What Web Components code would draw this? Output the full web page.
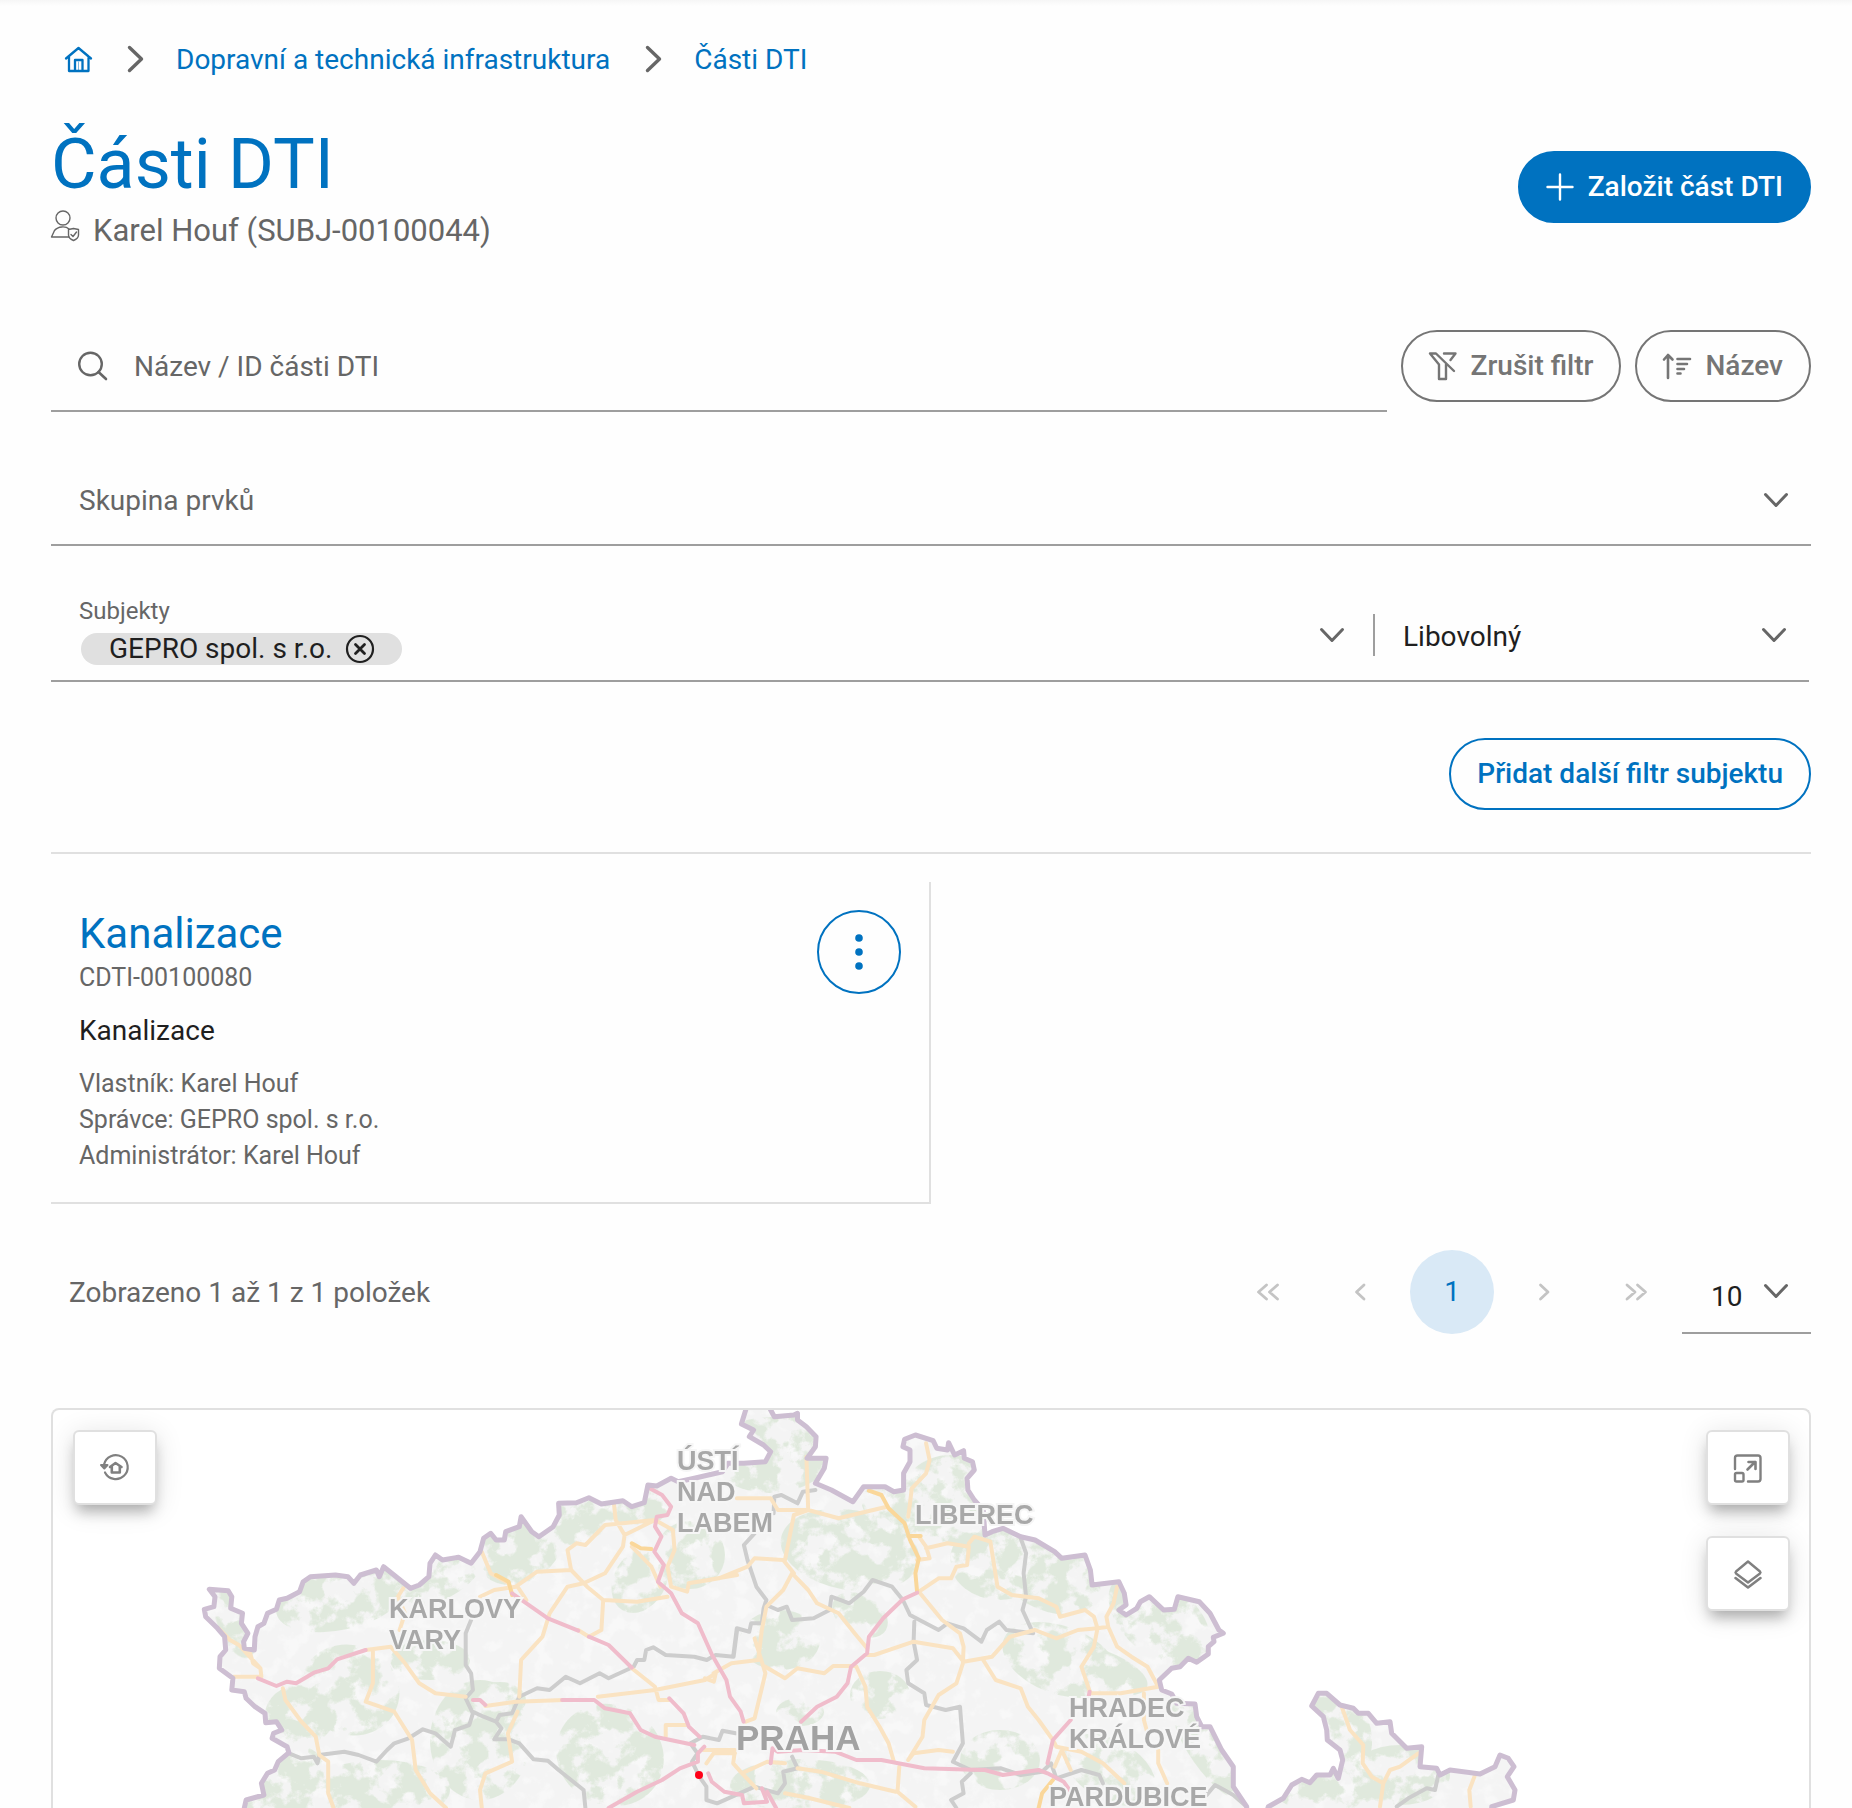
<!DOCTYPE html>
<html lang="cs">
<head>
<meta charset="utf-8">
<meta name="viewport" content="width=device-width, initial-scale=1">
<title>Části DTI</title>
<style>
  :root {
    --blue: #0072c0;
    --blue-soft: #d9e9f6;
    --text: #1f1f1f;
    --muted: #666;
    --control: #757575;
    --field-line: #9e9e9e;
    --rule: #e0e0e0;
  }
  html, body { height: 100%; }
  body {
    margin: 0;
    background: #fefefe;
    color: var(--text);
    font: 400 28px/40px Roboto, "Liberation Sans", sans-serif;
  }
</style>
</head>
<body>
<dti-page></dti-page>

<script>
const ICONS = {
  home: '<path d="M2 12.500 14.500 2 27 12.500M5 10.500V25H24.500V10.500M11 25V14H18.500V25" stroke-width="2.300"/><path d="M14.500 24V16" stroke-width="1" opacity=".5"/>',
  next: '<path d="M9.500 1.500 21.500 13 9.500 24.500" stroke-width="3.400"/>',
  user: '<g stroke-width="1.400"><circle cx="12" cy="10" r="7"/><path d="M18 29H.5L3.500 22.500C7 18 15 18 18 21"/><path d="M17.500 21.500 22.500 20.500 27.500 21.500V27C27.500 30 25 31.500 22.500 32.500 20 31.500 17.500 30 17.500 27Z"/><path d="M20 26.500 22 28.500 25.500 24"/></g>',
  plus: '<path d="M14 1.500V26.500M1.500 14H26.500" stroke-width="2.400"/>',
  search: '<circle cx="11.500" cy="12" r="11.300" stroke-width="2.400"/><path d="M19.500 20 27 27" stroke-width="2.600"/>',
  nofilter: '<path d="M1 1.500H7L25 19M1 1.500 10 12.500V27H17V12.500M15 1.500H26.500L21.500 8" stroke-width="2.400"/>',
  sort: '<path d="M5 26V3M1 7.500 5 3 9.500 7.500M14.500 7H27M14.500 12H24M14.500 17H21M14.500 21.500H17.500" stroke-width="2.600"/>',
  down: '<path d="M3.500 8.500 14 19.500 24.500 8.500" stroke-width="3"/>',
  remove: '<circle cx="14" cy="14" r="13" stroke-width="2.200"/><path d="M9.500 9.500 18.500 18.500M18.500 9.500 9.500 18.500" stroke-width="2.800"/>',
  dots: '<g fill="currentColor" stroke="none"><circle cx="14" cy="0" r="3.800"/><circle cx="14" cy="14" r="3.800"/><circle cx="14" cy="28" r="3.800"/></g>',
  first: '<path d="M12.500 7 4.500 14 12.500 21M23.500 7 15.500 14 23.500 21" stroke-width="2.800"/>',
  prev: '<path d="M18 7 10.500 14 18 21" stroke-width="2.800"/>',
  forward: '<path d="M10.500 7 18 14 10.500 21" stroke-width="2.800"/>',
  last: '<path d="M5 7 13 14 5 21M15.500 7 23.500 14 15.500 21" stroke-width="2.800"/>',
  reset: '<path d="M3 10.500A12 12 0 1 1 4 18.500" stroke-width="2.200"/><path d="M0 11H6.500L3.300 14.500Z" fill="currentColor" stroke-width="2"/><path d="M9 13 14.500 9 20.500 13M10.800 12.500V18.500H18.800V12.500" stroke-width="2.600"/>',
  expand: '<path d="M1 15V4Q1 1.500 3.500 1.500H24Q26.500 1.500 26.500 4V25Q26.500 27.500 24 27.500H14" stroke-width="2.400"/><rect x="1" y="19" width="8.500" height="8.500" rx="1.500" stroke-width="2.400"/><path d="M13.500 15.500 21 8M14.500 8H21.500V15" stroke-width="2.600"/>',
  layers: '<path d="M14 1.500 26 11.500Q27 12.500 26 13.500L14 22.500 2 13.500Q1 12.500 2 11.500Z" stroke-width="2.400"/><path d="M1.500 18 14 27.500 26.500 18" stroke-width="2.600"/>'
};

const FOCUS = 'button:focus-visible, select:focus-visible, input:focus-visible, a:focus-visible { outline: 3px solid var(--blue); outline-offset: 2px; }';

/* Base class: renders the element's template into an open shadow root. */
class DtiElement extends HTMLElement {
  connectedCallback() {
    if (this.shadowRoot) return;
    const t = document.createElement('template');
    t.innerHTML = `<style>*, *::before { box-sizing: border-box; } ${FOCUS} ${this.styles()}</style>${this.markup()}`;
    this.attachShadow({ mode: 'open' }).append(t.content.cloneNode(true));
  }
  styles() { return ''; }
  markup() { return '<slot></slot>'; }
}

class DtiIcon extends DtiElement {
  styles() {
    return `:host { display: block; flex: none; width: 28px; height: 28px; }
      svg { display: block; width: 28px; height: 28px; overflow: visible; fill: none; stroke: currentColor; stroke-linecap: round; stroke-linejoin: round; }`;
  }
  markup() { return `<svg viewBox="0 0 28 28" aria-hidden="true">${ICONS[this.getAttribute('name')]}</svg>`; }
}

class DtiButton extends DtiElement {
  styles() {
    return `:host { display: block; flex: none; color: var(--control); }
      :host([kind="primary"]), :host([kind="outline"]) { color: var(--blue); }
      button { display: flex; align-items: center; gap: 14px; padding: 14px 26px; border: 2px solid currentColor; border-radius: 36px;
        background: transparent; color: inherit; font: inherit; font-weight: 500; white-space: nowrap; cursor: pointer; }
      :host([kind="primary"]) button { background: var(--blue); border-color: var(--blue); color: #fff; }`;
  }
  markup() {
    const icon = this.getAttribute('icon');
    return `<button type="button">${icon ? `<dti-icon name="${icon}"></dti-icon>` : ''}<span><slot></slot></span></button>`;
  }
}

class DtiBreadcrumb extends DtiElement {
  styles() {
    return `:host { display: block; padding: 40px 0 0 13px; }
      ol { display: flex; flex-wrap: wrap; align-items: center; gap: 0 28px; margin: 0; padding: 0; list-style: none; }
      li { display: flex; align-items: center; gap: 28px; }
      li > dti-icon { color: var(--muted); }
      a { color: var(--blue); text-decoration: none; }`;
  }
  markup() {
    return `<nav aria-label="Drobečková navigace"><ol>
      <li><a href="#" aria-label="Domů"><dti-icon name="home"></dti-icon></a></li>
      <li><dti-icon name="next"></dti-icon><a href="#dti">Dopravní a technická infrastruktura</a></li>
      <li><dti-icon name="next"></dti-icon><a href="#casti" aria-current="page">Části DTI</a></li>
    </ol></nav>`;
  }
}

class DtiHeading extends DtiElement {
  styles() {
    return `:host { display: flex; align-items: center; justify-content: space-between; gap: 28px; margin-top: 40px; }
      h1 { margin: 0; color: var(--blue); font-size: 70px; font-weight: 400; line-height: 88px; }
      p { display: flex; gap: 14px; margin: 0; color: var(--muted); font-size: 31px; line-height: 46px; }`;
  }
  markup() {
    return `<div><h1><slot name="title"></slot></h1><p><dti-icon name="user"></dti-icon><slot name="subject"></slot></p></div><slot name="action"></slot>`;
  }
}

class DtiSearch extends DtiElement {
  styles() {
    return `:host { display: flex; align-items: flex-start; gap: 14px; margin-top: 68px; color: var(--muted); }
      label { flex: 1; min-width: 0; display: flex; align-items: center; gap: 27px; padding: 24px 28px; border-bottom: 2px solid var(--field-line); }
      input { flex: 1; min-width: 0; height: 40px; padding: 2px 0 0; border: 0; background: none; font: inherit; color: var(--text); }
      input::placeholder { color: var(--muted); opacity: 1; }
      .actions { display: flex; gap: 14px; padding-top: 8px; }`;
  }
  markup() {
    return `<label><dti-icon name="search"></dti-icon><input type="text" placeholder="Název / ID části DTI" aria-label="Název / ID části DTI"></label>
      <div class="actions"><slot></slot></div>`;
  }
}

/* Drop-down: a native select in a grid cell shared with its chevron. */
class DtiSelect extends DtiElement {
  styles() {
    return `:host { display: block; color: var(--text); }
      :host([muted]) { color: var(--muted); }
      div { display: grid; align-items: center; }
      select, dti-icon { grid-area: 1 / 1; }
      select { appearance: none; width: 100%; height: var(--select-height, 88px); padding: var(--select-padding, 2px 60px 0 28px); border: 0; background: none; color: inherit; font: inherit; cursor: pointer; }
      dti-icon { justify-self: end; margin-right: 21px; color: var(--muted); pointer-events: none; }`;
  }
  markup() {
    const options = this.getAttribute('options').split('|').map(o => `<option>${o}</option>`).join('');
    return `<div><select aria-label="${this.getAttribute('label')}">${options}</select><dti-icon name="down"></dti-icon></div>`;
  }
}

class DtiSubjects extends DtiElement {
  styles() {
    return `:host { display: flex; align-items: center; border-bottom: 2px solid var(--field-line); }
      .field { flex: 1; min-width: 0; padding: 7px 28px 15px; }
      .label { display: block; color: var(--muted); font-size: 24px; line-height: 28px; }
      .chip { display: inline-flex; align-items: center; gap: 14px; height: 32px; margin: 8px 0 0 2px; padding: 0 28px; border-radius: 16px; background: var(--rule); vertical-align: top; white-space: nowrap; }
      button { display: block; padding: 0; border: 0; background: none; color: inherit; cursor: pointer; }
      .toggle { margin-right: 27px; color: var(--muted); }
      dti-select { flex: 0 1 434px; --select-height: 90px; --select-padding: 4px 60px 0 28px; }
      .divider { flex: none; width: 2px; height: 42px; background: var(--field-line); }`;
  }
  markup() {
    return `<div class="field" role="group" aria-labelledby="l"><span class="label" id="l">Subjekty</span>
        <span class="chip"><slot></slot><button type="button" aria-label="Odebrat"><dti-icon name="remove"></dti-icon></button></span></div>
      <button type="button" class="toggle" aria-label="Rozbalit subjekty"><dti-icon name="down"></dti-icon></button>
      <span class="divider"></span>
      <dti-select label="Role subjektu" options="Libovolný|Vlastník|Správce|Administrátor"></dti-select>`;
  }
}

class DtiCard extends DtiElement {
  styles() {
    return `:host { display: flex; align-items: flex-start; gap: 28px; width: 50%; margin-top: 28px; padding: 28px; border: solid var(--rule); border-width: 0 2px 2px 0; box-sizing: border-box; }
      .body { flex: 1; min-width: 0; }
      h2 { margin: 0; font-size: 42px; font-weight: 400; line-height: 48px; }
      a { color: var(--blue); text-decoration: none; }
      .id { margin: 0; color: var(--muted); font-size: 25px; line-height: 40px; }
      .group { margin: 13px 0 15px; }
      .roles { color: var(--muted); font-size: 25px; line-height: 36px; }
      button { flex: none; display: grid; place-items: center; width: 84px; height: 84px; padding: 0; border: 2px solid var(--blue); border-radius: 50%; background: none; color: var(--blue); cursor: pointer; }`;
  }
  markup() {
    return `<div class="body"><h2><a href="#detail"><slot name="name"></slot></a></h2>
      <p class="id"><slot name="id"></slot></p><p class="group"><slot name="group"></slot></p>
      <div class="roles"><slot></slot></div></div>
      <button type="button" aria-label="Další akce"><dti-icon name="dots"></dti-icon></button>`;
  }
}

class DtiPaginator extends DtiElement {
  styles() {
    return `:host { display: flex; flex-wrap: wrap; align-items: center; gap: 0 4px; margin-top: 46px; color: var(--muted); }
      .info { flex: 1; padding: 2px 0 0 18px; }
      nav { display: flex; gap: 8px; }
      button { display: grid; place-items: center; width: 84px; height: 84px; padding: 0; border: 0; border-radius: 50%; background: none; color: #c4c4c4; font: inherit; }
      button[aria-current] { background: var(--blue-soft); color: var(--blue); }
      dti-select { width: 129px; border-bottom: 2px solid var(--field-line); --select-height: 82px; --select-padding: 12px 0 0 29px; }`;
  }
  markup() {
    return `<span class="info"><slot></slot></span>
      <nav aria-label="Stránkování">
        <button type="button" disabled aria-label="První strana"><dti-icon name="first"></dti-icon></button>
        <button type="button" disabled aria-label="Předchozí strana"><dti-icon name="prev"></dti-icon></button>
        <button type="button" aria-current="page">1</button>
        <button type="button" disabled aria-label="Další strana"><dti-icon name="forward"></dti-icon></button>
        <button type="button" disabled aria-label="Poslední strana"><dti-icon name="last"></dti-icon></button>
      </nav>
      <dti-select label="Počet položek na stránku" options="10|20|50"></dti-select>`;
  }
}

/* Map sheets: origin x, origin y and the digitising scale of each axis. */
const SHEETS = { w: [180, 1400, 2.8, 3], m: [660, 1400, 2.8, 3], e: [1100, 1500, 3, 3] };
const trace = (sheet, pts) => {
  const [ox, oy, sx, sy] = SHEETS[sheet];
  return pts.trim().split(/\s+/).map(p => {
    const [x, y] = p.split(',');
    return (ox + x / sx).toFixed(1) + ' ' + (oy + y / sy).toFixed(1);
  }).join('L');
};
const lines = list => list.map(([s, p]) => 'M' + trace(s, p)).join('');

const COUNTRY = 'M' + [
  ['w', '178,1300 180,1224 185,1200 235,1185 228,1150 245,1120 265,1110 275,1085 305,1058 300,1040 258,1015 262,1000 285,990 270,965 240,968 238,940 210,920 185,895 180,875 145,870 148,835 110,805 112,770 128,750 125,710 105,685 72,650 68,628 95,620 98,590 82,568 135,572 145,590 142,625 175,640 172,670 190,700 178,725 180,745 208,750 210,710 218,680 235,670 245,640 270,628 278,600 300,595 335,575 345,545 365,530 435,525 470,530 487,550 505,525 550,510 558,530 570,500 605,530 645,565 670,555 697,530 700,490 715,465 735,480 780,472 815,490 840,455 850,415 870,400 885,420 908,420 912,395 950,380 955,350 985,395 1005,410 1045,380 1062,345 1060,310 1110,308 1145,293 1180,312 1240,302 1265,320 1300,308 1310,255 1335,258 1375,235 1395,245 1440,235'],
  ['m', '175,215 190,190 235,190 295,185 310,155 290,135 250,110 262,90 228,72 240,30 240,10 300,10 320,50 375,45 385,40 385,60 410,80 437,110 435,140 412,175 465,175 460,205 435,250 480,270 540,305 570,260 630,260 655,275 682,270 682,220 700,185 700,150 680,140 685,118 715,105 765,122 775,145 805,150 808,128 825,165 850,152 852,175 875,185 880,210 860,235 862,270 880,300 905,330 910,405 930,395 960,385 1010,410 1050,420 1105,455 1125,475 1190,465 1205,510 1210,555 1285,545 1300,580 1305,615 1285,630 1305,645 1335,625 1345,605 1370,590 1410,630 1440,628 1450,590 1510,605 1540,640 1565,690'],
  ['e', '370,400 340,412 342,425 325,440 325,462 290,487 265,475 240,500 215,505 178,540 185,570 215,582 230,610 285,612 290,650 305,680 330,680 365,750 400,800 400,860 440,920 440,970 490,970 505,920 550,895 575,855 605,838 630,848 650,825 690,825 700,805 715,835 728,780 720,750 682,720 680,690 670,650 635,618 655,580 680,580 720,615 760,625 775,640 805,640 830,670 870,665 875,700 920,745 965,740 960,800 1010,805 1020,825 1050,810 1140,822 1185,800 1200,765 1225,775 1242,800 1222,830 1245,870 1240,900 1175,920 1175,970']
].map(([s, p]) => trace(s, p)).join('L') + 'Z';

const REGIONS = lines([
  ['w', '305,1060 340,1075 375,1070 385,1090 390,1065 460,1055 500,1065 550,1085 580,1050 600,1030 640,1015 680,988 715,1000 758,1040 770,990 810,975 820,940 800,895 820,870 815,820 800,795 800,700 815,660'],
  ['w', '820,935 850,950 885,965 900,985 880,1018 920,1018 950,1030 990,1078 1030,1082 1060,1110 1095,1140 1130,1170 1135,1224'],
  ['w', '885,965 895,945 930,940 950,890 1000,865 1035,870 1080,830 1120,850 1175,820 1200,835 1270,800 1280,780 1300,780 1305,750 1325,742 1360,765 1440,770 1475,780 1500,765 1550,770 1560,690'],
  ['m', '205,770 215,685 250,695 255,670 285,670 290,625 298,600 270,560 245,480 235,435 265,400'],
  ['m', '298,615 330,630 355,620 370,660 430,655 475,630 480,590 530,610 570,575 595,540 650,560 680,600 700,645 780,690 805,670 850,685 900,725 915,690 950,665 970,690 1045,700 1015,630 1025,590 1018,520 1025,460 1010,415'],
  ['m', '435,270 400,275 385,310 340,285 320,290 318,340'],
  ['m', '712,665 710,725 720,780 690,810 695,850 740,880 745,915 800,930 840,920 848,1030 820,1085 870,1110 955,1105 1010,1125 1070,1115 1095,1090 1110,1135 1180,1110 1230,1125 1240,1150'],
  ['m', '870,1120 845,1145 850,1180 815,1200 830,1224'],
  ['m', '212,1000 175,992 165,1020 120,1010 85,1030 105,1060 90,1085 110,1130 130,1160 130,1200 160,1210 265,1160 330,1180 350,1150 345,1115 385,1105 370,1070'],
  ['e', '440,920 400,885 345,855 320,885'], ['e', '890,920 925,895 980,865 1005,870 1015,825']
]);

const ROADS = lines([
  ['w', '108,685 140,720 165,735 225,805 228,830 150,830'], ['w', '195,755 205,790 225,805'],
  ['w', '288,865 295,900 340,965 380,1010 390,1065 415,1085 415,1180 430,1224'],
  ['w', '520,750 590,740 630,790 670,850 715,880 800,890'], ['w', '540,750 540,850 520,905 600,935 650,1020 660,1110 700,1180 745,1224'],
  ['w', '625,565 610,590 630,640 615,690'], ['w', '845,455 870,520 920,550 930,580'], ['w', '840,590 880,570 940,560 1000,515 1095,510'],
  ['w', '945,560 970,600'], ['w', '1095,510 1085,450 1110,430 1135,435 1190,375 1330,360'], ['w', '1215,310 1220,360 1245,405 1240,440 1190,520 1130,550 1085,560 1035,640 1015,710 955,780 950,890'],
  ['w', '1095,510 1140,560 1185,600 1280,605 1365,590'], ['w', '1185,600 1180,690 1145,710 1115,690'], ['w', '1245,405 1330,360 1380,390 1385,450 1365,500 1375,560 1420,575 1425,550 1560,525'],
  ['w', '1265,440 1320,500 1345,560'], ['w', '855,918 940,905 1075,900'], ['w', '945,935 918,1000 930,1085 855,1120 840,1170 845,1224'],
  ['w', '1265,805 1330,860 1340,900 1370,900'], ['w', '1170,890 1330,870 1470,840 1500,820 1495,845 1470,835'], ['w', '1360,1010 1360,975 1420,975'],
  ['m', '150,820 200,790 275,780 285,690 298,620 345,570 370,520 415,570 440,610 500,640 545,700 580,745'],
  ['m', '265,715 295,820 265,955 240,965'], ['m', '295,800 350,835 385,805 460,820 485,798 545,798'],
  ['m', '80,550 165,535 245,500 265,475 345,480 375,520'], ['m', '350,480 375,345 415,330 410,170'], ['m', '215,295 310,295 330,330 415,330 500,355 635,320'],
  ['m', '745,130 755,180 745,220 705,265 700,310 695,350'], ['m', '725,410 745,440 755,475 720,480'], ['m', '745,445 805,430 865,440 860,495 830,500 815,535 780,535 725,575 790,660 840,700 850,740 848,790 830,850 780,885 740,960 735,1010 695,1080'],
  ['m', '865,430 880,410 925,425 945,560 985,585 1060,595 1110,620 1120,650 1190,630 1215,650 1225,685'], ['m', '1280,560 1270,610 1250,650 1255,680 1225,685 1170,690 1110,715 1050,690 980,710 930,770 850,785 820,745 710,725 600,765 580,765'],
  ['m', '1225,685 1215,740 1180,800 1205,880 1290,880 1395,860 1365,800 1320,770 1280,740 1255,680'], ['m', '905,780 940,840 1010,865 1030,920 1060,960 1100,1020 1110,1040'],
  ['m', '550,800 575,860 580,920 615,980 640,1030 655,1085'], ['m', '695,1080 710,1060 780,1050 820,1055'], ['m', '670,1100 665,1175 715,1220'], ['m', '385,1105 450,1115 560,1150 660,1175'], ['m', '350,1180 420,1195 530,1224'],
  ['m', '1110,1040 1180,1055 1240,1090 1300,1150'], ['m', '1355,880 1355,960 1365,1000'], ['m', '1395,1050 1395,1090 1420,1150'], ['m', '1105,1100 1125,1050 1150,1110'],
  ['m', '120,1050 210,1050 205,1090 230,1120 300,1085 350,1090'], ['m', '230,1120 270,1165'], ['m', '130,1090 150,1060 210,1060'],
  ['e', '725,620 750,690 790,735 788,790 815,830 850,850 840,920'], ['e', '955,760 900,800 870,810 850,850'], ['e', '1125,825 1108,870 1112,920']
]);

const MAIN_ROADS = lines([
  ['w', '885,525 920,545 930,585'], ['w', '1265,430 1290,445 1320,447'],
  ['m', '585,272 620,285 640,325 685,370 700,420 725,475 715,520 720,575'], ['m', '695,408 730,408'], ['m', '1100,1140 1070,1180 1060,1224']
]);

const MOTORWAYS = lines([
  ['w', '218,835 270,858 300,845 325,850 375,818 415,805 440,778 520,750'], ['w', '930,580 1030,655 1115,692'], ['w', '1145,710 1200,735 1265,803'],
  ['w', '1315,265 1350,285 1375,320 1365,345 1335,350 1330,380 1348,410 1328,455 1355,495 1338,545 1375,580 1405,640 1450,670 1490,765 1530,840 1540,890 1570,935 1578,965'],
  ['w', '820,900 840,900 855,915'], ['w', '1070,900 1160,900 1190,925 1260,940 1290,990 1330,1010 1440,1035'], ['w', '1370,895 1410,940 1425,980 1455,1010'],
  ['w', '1200,1224 1280,1175 1350,1140 1400,1105 1450,1085 1450,1060 1468,1040'], ['m', '135,1120 145,1145 180,1175 230,1185 235,1210 300,1205 285,1165'], ['m', '300,1175 325,1224'],
  ['m', '720,578 680,598 625,655 585,710 580,760 535,800 525,850 495,890 440,920 395,965'], ['m', '310,1090 315,1045 330,1055 400,1050 490,1055 550,1080 620,1080 740,1105 910,1110 960,1125 1060,1110 1085,1120 1130,1145 1160,1190'],
  ['m', '1085,1090 1100,1020 1150,960'], ['m', '1200,890 1203,875']
]);

/* Wooded areas: centre x, centre y, radius x, radius y, rotation. */
const WOODS = [
  [340, 1600, 65, 30, -12], [440, 1575, 50, 24, -30], [520, 1548, 45, 34, -30], [590, 1515, 60, 22, -25], [640, 1505, 30, 20, 0], [350, 1690, 50, 45, 20], [300, 1715, 35, 30, 0],
  [235, 1620, 18, 40, -20], [480, 1740, 50, 60, 0], [610, 1755, 55, 50, 30], [640, 1580, 35, 26, -60], [690, 1555, 35, 34, 0], [770, 1455, 60, 38, 0], [850, 1550, 70, 40, 10], [790, 1440, 40, 24, 0],
  [900, 1510, 40, 24, 20], [950, 1500, 50, 45, 0], [1045, 1570, 60, 38, 30], [1000, 1560, 50, 40, 0], [1160, 1620, 60, 36, 40], [1060, 1660, 60, 34, 20], [1100, 1670, 50, 20, 20], [880, 1695, 30, 24, 0],
  [860, 1615, 30, 20, 30], [800, 1712, 24, 14, 0], [800, 1785, 70, 26, 0], [1000, 1760, 40, 30, 0], [1110, 1770, 50, 30, 30], [1210, 1750, 20, 60, -35], [1340, 1730, 30, 45, -20], [1340, 1785, 70, 30, 0], [1400, 1775, 50, 30, 0],
  [280, 1780, 50, 40, 0], [380, 1790, 70, 30, 0], [780, 1640, 40, 30, 0], [430, 1660, 40, 20, 0], [500, 1700, 26, 18, 0]
].map(([x, y, rx, ry, a]) => `<ellipse cx="${x}" cy="${y}" rx="${rx}" ry="${ry}" transform="rotate(${a} ${x} ${y})"/>`).join('');

class DtiMap extends DtiElement {
  styles() {
    return `:host { flex: 1 0 400px; display: flex; position: relative; height: 400px; margin-top: 74px; border: 2px solid var(--rule); border-bottom: 0; border-radius: 8px 8px 0 0; overflow: hidden; box-sizing: border-box; background: #fff; }
      .canvas { flex: 1; min-width: 0; height: 100%; display: block; }
      .canvas text { font: 700 27px "Liberation Sans", sans-serif; fill: #a8a8a8; stroke: #f6f6f6; stroke-width: 4; paint-order: stroke; }
      .canvas .capital { font-size: 35px; fill: #a2a2a2; }
      .tools { position: absolute; top: 20px; display: grid; gap: 31px; }
      .left { left: 20px; }
      .right { right: 19px; }
      button { display: grid; place-items: center; width: 84px; height: 75px; padding: 0; border: 2px solid var(--rule); border-radius: 6px; background: #fff; color: #808080; box-shadow: 0 10px 14px -4px rgb(0 0 0 / 28%), 0 4px 28px rgb(0 0 0 / 12%); cursor: pointer; }`;
  }
  markup() {
    const path = (d, color, width) => `<path d="${d}" fill="none" stroke="${color}" stroke-width="${width}" stroke-linejoin="round" stroke-linecap="round"/>`;
    return `<svg class="canvas" viewBox="53 1410 1756 398" preserveAspectRatio="xMidYMin slice" role="img" aria-label="Mapa České republiky">
      <defs>
        <clipPath id="land"><path d="${COUNTRY}"/></clipPath>
        <filter id="forest" x="0" y="0" width="1" height="1" color-interpolation-filters="sRGB">
          <feTurbulence type="fractalNoise" baseFrequency=".045" numOctaves="5" seed="11"/>
          <feColorMatrix values="0 0 0 0 .878  0 0 0 0 .915  0 0 0 0 .865  9 0 0 0 -3.900"/>
          <feComposite in2="SourceGraphic" operator="in"/>
        </filter>
        <filter id="relief" x="0" y="0" width="1" height="1" color-interpolation-filters="sRGB">
          <feTurbulence type="fractalNoise" baseFrequency=".06" numOctaves="4" seed="4"/>
          <feColorMatrix values="0 0 0 0 1  0 0 0 0 1  0 0 0 0 1  0 5 0 0 -2.500"/>
          <feComposite in2="SourceGraphic" operator="in"/>
        </filter>
      </defs>
      <path d="${COUNTRY}" fill="#f4f4f4"/>
      <g clip-path="url(#land)">
        <path d="${COUNTRY}" filter="url(#relief)" opacity=".4"/>
        <g filter="url(#forest)">${WOODS}</g>
        ${path(REGIONS, '#cdcdcd', 4)}
        ${path(ROADS, '#fae3c2', 4)}
        ${path(MAIN_ROADS, '#fad79a', 4)}
        ${path(MOTORWAYS, '#f0bccb', 4)}
      </g>
      ${path(COUNTRY, '#cdbed2', 5)}
      <circle cx="699" cy="1775" r="4" fill="#ff0018"/>
      <text x="677" y="1470">ÚSTÍ</text><text x="677" y="1501">NAD</text><text x="677" y="1532">LABEM</text>
      <text x="915" y="1524">LIBEREC</text>
      <text x="389" y="1618">KARLOVY</text><text x="389" y="1649">VARY</text>
      <text x="1069" y="1717">HRADEC</text><text x="1069" y="1748">KRÁLOVÉ</text>
      <text x="1049" y="1806">PARDUBICE</text>
      <text class="capital" x="736" y="1750">PRAHA</text>
    </svg>
    <div class="tools left"><button type="button" aria-label="Výchozí pohled"><dti-icon name="reset"></dti-icon></button></div>
    <div class="tools right"><button type="button" aria-label="Zvětšit mapu"><dti-icon name="expand"></dti-icon></button><button type="button" aria-label="Vrstvy"><dti-icon name="layers"></dti-icon></button></div>`;
  }
}

class DtiPage extends DtiElement {
  styles() {
    return `:host { display: flex; min-height: 100vh; background: linear-gradient(#f6f6f6, transparent 6px); }
      main { flex: 1; min-width: 0; display: flex; flex-direction: column; padding: 0 41px 0 51px; }
      .group { margin-top: 44px; border-bottom: 2px solid var(--field-line); }
      dti-subjects { margin: 44px 2px 0 0; }
      .add { align-self: flex-end; margin-top: 56px; }
      hr { width: 100%; height: 2px; margin: 42px 0 0; border: 0; background: var(--rule); }`;
  }
  markup() {
    return `<main>
      <dti-breadcrumb></dti-breadcrumb>
      <dti-heading>
        <span slot="title">Části DTI</span>
        <span slot="subject">Karel Houf (SUBJ-00100044)</span>
        <dti-button slot="action" kind="primary" icon="plus">Založit část DTI</dti-button>
      </dti-heading>
      <dti-search>
        <dti-button icon="nofilter">Zrušit filtr</dti-button>
        <dti-button icon="sort">Název</dti-button>
      </dti-search>
      <dti-select class="group" muted label="Skupina prvků" options="Skupina prvků"></dti-select>
      <dti-subjects>GEPRO spol. s r.o.</dti-subjects>
      <dti-button class="add" kind="outline">Přidat další filtr subjektu</dti-button>
      <hr>
      <dti-card>
        <span slot="name">Kanalizace</span><span slot="id">CDTI-00100080</span><span slot="group">Kanalizace</span>
        <div>Vlastník: Karel Houf</div><div>Správce: GEPRO spol. s r.o.</div><div>Administrátor: Karel Houf</div>
      </dti-card>
      <dti-paginator>Zobrazeno 1 až 1 z 1 položek</dti-paginator>
      <dti-map></dti-map>
    </main>`;
  }
}

customElements.define('dti-icon', DtiIcon);
customElements.define('dti-button', DtiButton);
customElements.define('dti-breadcrumb', DtiBreadcrumb);
customElements.define('dti-heading', DtiHeading);
customElements.define('dti-search', DtiSearch);
customElements.define('dti-select', DtiSelect);
customElements.define('dti-subjects', DtiSubjects);
customElements.define('dti-card', DtiCard);
customElements.define('dti-paginator', DtiPaginator);
customElements.define('dti-map', DtiMap);
customElements.define('dti-page', DtiPage);
</script>
</body>
</html>
